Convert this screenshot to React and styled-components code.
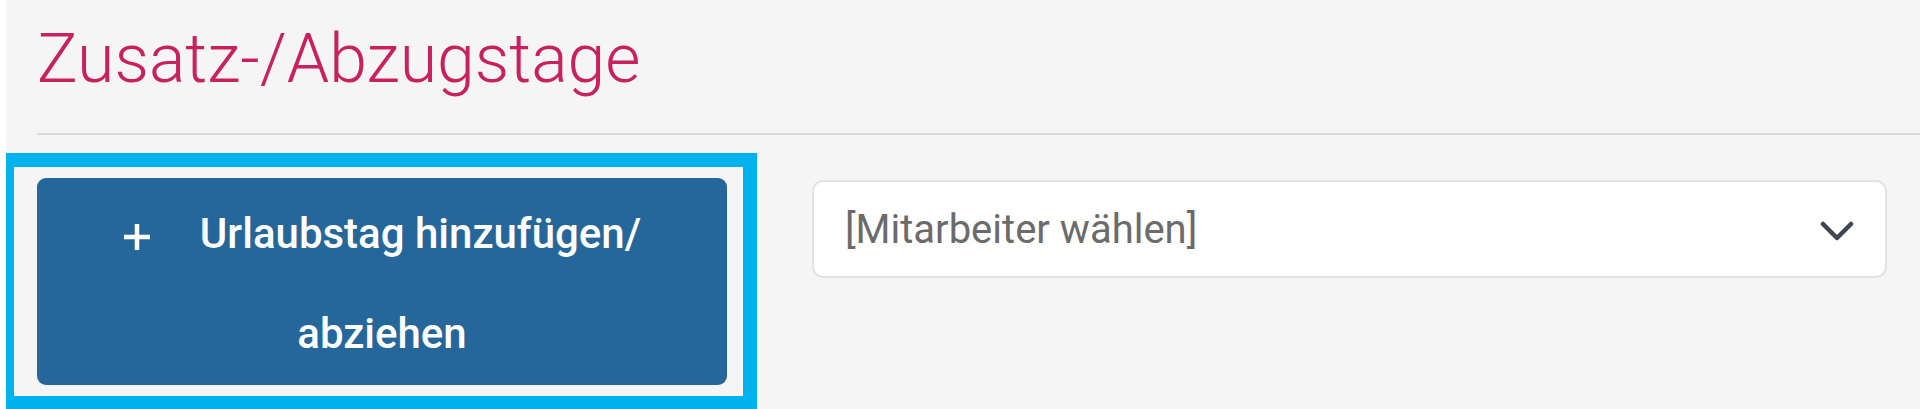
import React from 'react'
import styled, { createGlobalStyle } from 'styled-components'

const GlobalStyle = createGlobalStyle`
    html, body {
        margin: 0;
        padding: 0;
        background: #ffffff;
        font-family: Roboto, "Liberation Sans", Arial, sans-serif;
    }
`

const colors = {
    bg: '#f5f5f5',
    crimson: '#c8215e',
    blue: '#26679b',
    line: '#dadada',
    border: '#e2e2e2',
    grey: '#6b6b6b',
    dark: '#3f4650',
    cyan: '#00b2ee',
}

const Page = styled.div`
    margin-left: 6px;
    min-height: 409px;
    background: ${colors.bg};
    padding-left: 31px;
    overflow: hidden;
`

const Title = styled.h1`
    margin: 0;
    padding-top: 20px;
    font-size: 68px;
    line-height: 79px;
    font-weight: 300;
    color: ${colors.crimson};
`

const Divider = styled.div`
    margin-top: 34px;
    height: 2px;
    background: ${colors.line};
`

const Row = styled.div`
    display: flex;
    align-items: flex-start;
    gap: 85px;
    padding: 43px 33px 0 0;
`

const Highlight = styled.div`
    position: relative;
    flex: 0 0 690px;

    &::after {
        content: '';
        position: absolute;
        top: -25px;
        left: -37px;
        right: -30px;
        bottom: -25px;
        border: 14px solid ${colors.cyan};
        pointer-events: none;
    }
`

const AddButton = styled.button`
    width: 100%;
    border: none;
    border-radius: 9px;
    background: ${colors.blue};
    color: #ffffff;
    font-family: inherit;
    font-size: 42px;
    font-weight: 500;
    line-height: 100px;
    text-align: center;
    padding: 6px 20px 1px;
    cursor: pointer;

    svg {
        vertical-align: -3px;
        margin-right: 49px;
    }
`

const Select = styled.div`
    flex: 1;
    margin-top: 2px;
    height: 98px;
    box-sizing: border-box;
    display: flex;
    align-items: center;
    justify-content: space-between;
    padding: 0 31px 0 31px;
    background: #ffffff;
    border: 2px solid ${colors.border};
    border-radius: 11px;
    font-size: 40px;
    color: ${colors.grey};

    svg {
        margin-top: 4px;
    }
`

function PlusIcon() {
    return (
        <svg width="28" height="28" viewBox="0 0 28 28">
            <path d="M14 1v26M1 14h26" stroke="#ffffff" strokeWidth="4.5" fill="none" />
        </svg>
    )
}

function Chevron() {
    return (
        <svg width="34" height="20" viewBox="0 0 34 20">
            <path d="M3 3l14 14L31 3" stroke={colors.dark} strokeWidth="4.5" fill="none" strokeLinecap="round" strokeLinejoin="round" />
        </svg>
    )
}

export default function App() {
    return (
        <>
            <GlobalStyle />
            <Page>
                <Title>Zusatz-/Abzugstage</Title>
                <Divider />
                <Row>
                    <Highlight>
                        <AddButton>
                            <PlusIcon />
                            Urlaubstag hinzufügen/<br />abziehen
                        </AddButton>
                    </Highlight>
                    <Select>
                        <span>[Mitarbeiter wählen]</span>
                        <Chevron />
                    </Select>
                </Row>
            </Page>
        </>
    )
}
